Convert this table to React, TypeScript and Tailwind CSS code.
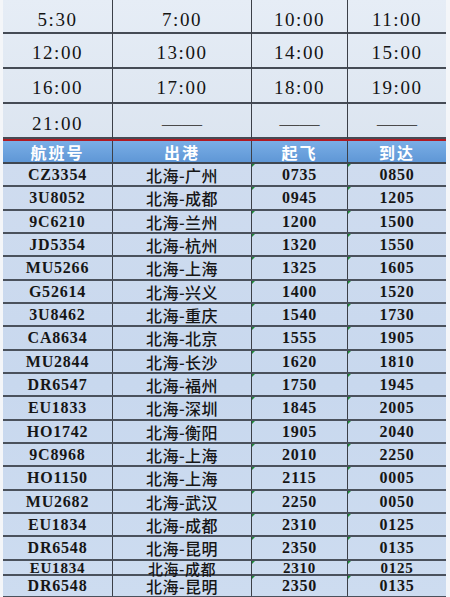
const times = [
  ['5:30', '7:00', '10:00', '11:00'],
  ['12:00', '13:00', '14:00', '15:00'],
  ['16:00', '17:00', '18:00', '19:00'],
  ['21:00', '——', '——', '——'],
];

const flights: { no: string; route: string; dep: string; arr: string }[] = [
  { no: 'CZ3354', route: '北海-广州', dep: '0735', arr: '0850' },
  { no: '3U8052', route: '北海-成都', dep: '0945', arr: '1205' },
  { no: '9C6210', route: '北海-兰州', dep: '1200', arr: '1500' },
  { no: 'JD5354', route: '北海-杭州', dep: '1320', arr: '1550' },
  { no: 'MU5266', route: '北海-上海', dep: '1325', arr: '1605' },
  { no: 'G52614', route: '北海-兴义', dep: '1400', arr: '1520' },
  { no: '3U8462', route: '北海-重庆', dep: '1540', arr: '1730' },
  { no: 'CA8634', route: '北海-北京', dep: '1555', arr: '1905' },
  { no: 'MU2844', route: '北海-长沙', dep: '1620', arr: '1810' },
  { no: 'DR6547', route: '北海-福州', dep: '1750', arr: '1945' },
  { no: 'EU1833', route: '北海-深圳', dep: '1845', arr: '2005' },
  { no: 'HO1742', route: '北海-衡阳', dep: '1905', arr: '2040' },
  { no: '9C8968', route: '北海-上海', dep: '2010', arr: '2250' },
  { no: 'HO1150', route: '北海-上海', dep: '2115', arr: '0005' },
  { no: 'MU2682', route: '北海-武汉', dep: '2250', arr: '0050' },
  { no: 'EU1834', route: '北海-成都', dep: '2310', arr: '0125' },
  { no: 'DR6548', route: '北海-昆明', dep: '2350', arr: '0135' },
  { no: 'EU1834', route: '北海-成都', dep: '2310', arr: '0125' },
  { no: 'DR6548', route: '北海-昆明', dep: '2350', arr: '0135' },
];

const serif = 'font-["Liberation_Serif","Noto_Sans_CJK_SC",serif]';

// the photo has rows of ~23.3px, one row squashed near the bottom
function rowHeight(i: number) {
  if (i === 17) return 'h-[15px] text-[15px]';
  if (i === 18) return 'h-[22px] text-[16px]';
  return i % 3 === 1 ? 'h-[24px] text-[16px]' : 'h-[23px] text-[16px]';
}

function Marker() {
  return <span className="absolute left-0 top-0 w-0 h-0 border-t-[3px] border-r-[3px] border-t-[#1f8a3a] border-r-transparent" />;
}

export default function App() {
  return (
    <div className="w-[450px] h-[597px] overflow-hidden bg-[#f4f6f9] pl-[3px] pr-[4px]">
      {/* departure times */}
      <div className="bg-gradient-to-b from-[#e6edf6] to-[#dce5f0]">
        {times.map((row, i) => (
          <div
            key={i}
            className={`grid grid-cols-[110px_139px_96px_98px] border-b-2 border-[#454b55] ${i === 0 ? 'h-[34px]' : 'h-[35px]'} ${i === 3 ? 'border-b-0' : ''}`}
          >
            {row.map((t, j) => (
              <div
                key={j}
                className={`flex items-center justify-center ${serif} text-[19px] tracking-[1.5px] text-[#141414] ${j < 3 ? 'border-r border-[#3c4048]' : ''} ${i === 0 ? 'pt-[6px]' : 'pt-[5px]'}`}
              >
                {t === '——' ? <span className="text-[#4a4a4a] text-[20px] tracking-[0px]">——</span> : t}
              </div>
            ))}
          </div>
        ))}
      </div>

      {/* red separator */}
      <div className="h-[2px] bg-[#b01a22]" />

      {/* flights table */}
      <div className="grid grid-cols-[110px_139px_96px_98px] h-[23px] bg-gradient-to-b from-[#7aaee6] to-[#5f97d6] border-b-2 border-[#3f4650]">
        {['航班号', '出港', '起飞', '到达'].map((h, j) => (
          <div
            key={h}
            className={`flex items-center justify-center font-["Noto_Sans_CJK_SC",sans-serif] font-bold text-[16px] leading-none tracking-[2px] text-white ${j < 3 ? 'border-r border-[#3c4048]' : ''}`}
          >
            {h}
          </div>
        ))}
      </div>
      <div className="bg-gradient-to-b from-[#cfdcef] via-[#c8d8ee] to-[#cddcf0]">
        {flights.map((f, i) => (
          <div
            key={i}
            className={`grid grid-cols-[110px_139px_96px_98px] ${rowHeight(i)} border-b-2 border-[#4a515c] text-[#161616] leading-none`}
          >
            <div className={`flex items-center justify-center ${serif} font-bold tracking-[0.8px] border-r border-[#3c4048]`}>
              {f.no}
            </div>
            <div className="flex items-center justify-center font-['Noto_Sans_CJK_SC',sans-serif] font-medium tracking-[0.5px] border-r border-[#3c4048]">
              {f.route}
            </div>
            <div className={`relative flex items-center justify-center ${serif} font-bold tracking-[0.8px] border-r border-[#3c4048]`}>
              <Marker />
              {f.dep}
            </div>
            <div className={`relative flex items-center justify-center ${serif} font-bold tracking-[0.8px]`}>
              <Marker />
              {f.arr}
            </div>
          </div>
        ))}
      </div>
    </div>
  );
}
